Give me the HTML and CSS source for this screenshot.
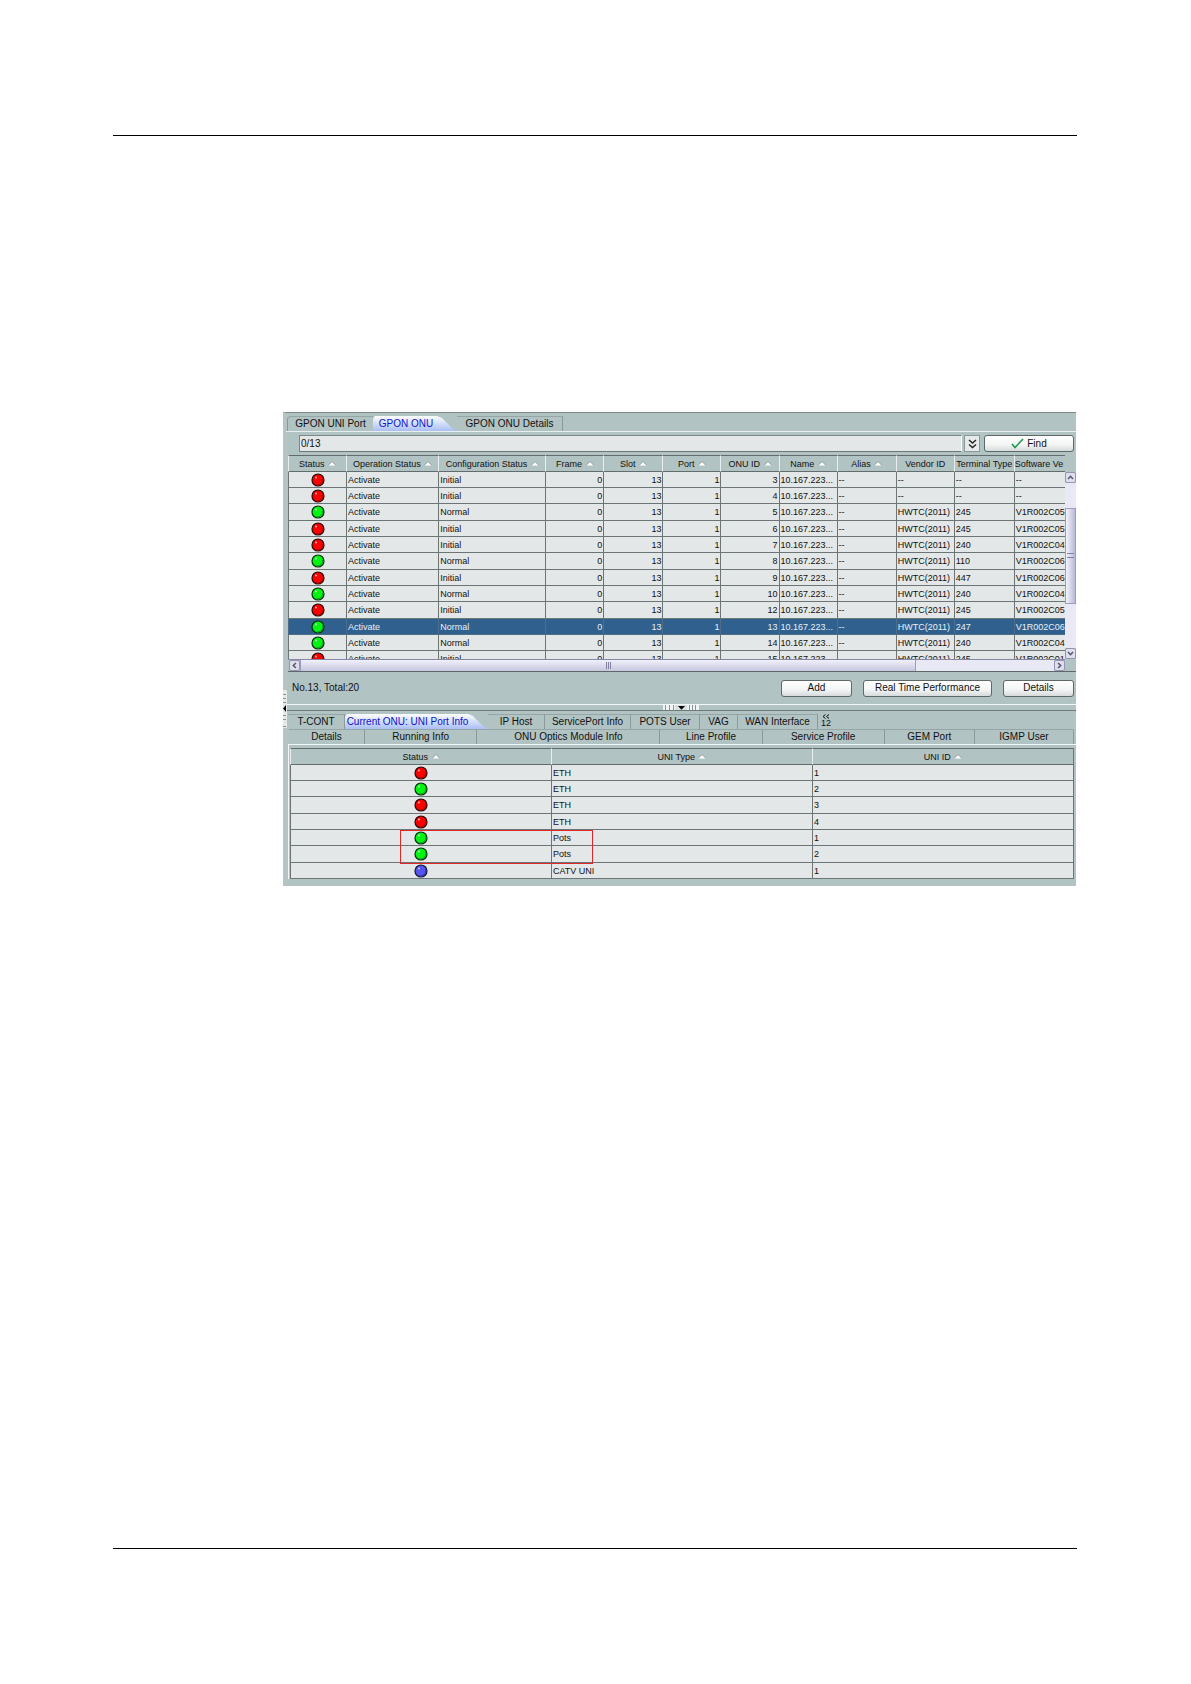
FILE: index.html
```html
<!DOCTYPE html>
<html lang="en">

<head>
    <meta charset="UTF-8">
    <meta name="viewport" content="width=device-width, initial-scale=1.0">
    <title>GPON ONU</title>
    <link rel="stylesheet" href="styles.css">
</head>

<body>
    <!-- shared icons -->
    <svg class="defs" width="0" height="0" aria-hidden="true">
        <symbol id="sort" viewBox="0 0 8 5">
            <path d="M0 4.5L4 .5L8 4.5Z" fill="#fff"/>
            <path d="M0 4.5L4 .5L8 4.5" fill="none" stroke="#7c8a8a" stroke-width=".8"/>
        </symbol>
        <symbol id="led-red" viewBox="0 0 14 14">
            <circle cx="7" cy="7" r="6" fill="#fa0000" stroke="#2a0808" stroke-width="1.2"/>
            <path d="M11.6 5.5A5 5 0 0 1 5.5 11.7" fill="none" stroke="#b00" stroke-width="1"/>
            <circle cx="5" cy="4.6" r="1" fill="#ffb0b0"/>
        </symbol>
        <symbol id="led-green" viewBox="0 0 14 14">
            <circle cx="7" cy="7" r="6" fill="#00f610" stroke="#08300c" stroke-width="1.2"/>
            <path d="M11.6 5.5A5 5 0 0 1 5.5 11.7" fill="none" stroke="#0a9a30" stroke-width="1"/>
            <circle cx="5" cy="4.6" r="1" fill="#c8ffc8"/>
        </symbol>
        <symbol id="led-blue" viewBox="0 0 14 14">
            <circle cx="7" cy="7" r="6" fill="#5454f0" stroke="#14143c" stroke-width="1.2"/>
            <path d="M11.6 5.5A5 5 0 0 1 5.5 11.7" fill="none" stroke="#3030a8" stroke-width="1"/>
            <circle cx="5" cy="4.6" r="1" fill="#d0d0ff"/>
        </symbol>
    </svg>

    <div class="page">
        <main class="window">
            <section class="top">
                <div class="tabs">
                    <button class="tab first">GPON UNI Port</button>
                    <button class="tab active">GPON ONU</button>
                    <button class="tab details">GPON ONU Details</button>
                </div>

                <div class="filter">
                    <input type="text" value="0/13" aria-label="Filter">
                    <button class="expand" aria-label="Expand">
                        <svg width="9" height="10" viewBox="0 0 9 10"><path d="M1 1L4.500 4L8 1M1 5.500L4.500 8.500L8 5.500" fill="none" stroke="#222" stroke-width="1.400"/></svg>
                    </button>
                    <button class="btn find">
                        <svg width="13" height="11" viewBox="0 0 13 11"><path d="M1 6L4 9.500L12 1" fill="none" stroke="#1c9a50" stroke-width="1.600"/></svg>
                        Find
                    </button>
                </div>

                <div class="grid">
                    <div class="grid-body">
                        <table class="data onu">
                            <colgroup>
                                <col class="c58"><col class="c92"><col class="c107"><col class="c58"><col class="c59"><col class="c58">
                                <col class="c58"><col class="c58"><col class="c59"><col class="c58"><col class="c60"><col class="c51">
                            </colgroup>
                            <thead>
                                <tr>
                                    <th>Status <svg class="sort"><use href="#sort"/></svg></th>
                                    <th>Operation Status <svg class="sort"><use href="#sort"/></svg></th>
                                    <th>Configuration Status <svg class="sort"><use href="#sort"/></svg></th>
                                    <th>Frame <svg class="sort"><use href="#sort"/></svg></th>
                                    <th>Slot <svg class="sort"><use href="#sort"/></svg></th>
                                    <th>Port <svg class="sort"><use href="#sort"/></svg></th>
                                    <th>ONU ID <svg class="sort"><use href="#sort"/></svg></th>
                                    <th>Name <svg class="sort"><use href="#sort"/></svg></th>
                                    <th>Alias <svg class="sort"><use href="#sort"/></svg></th>
                                    <th>Vendor ID</th>
                                    <th>Terminal Type</th>
                                    <th class="left">Software Ve</th>
                                </tr>
                            </thead>
                            <tbody>
                                <tr><td><svg class="led"><use href="#led-red"/></svg></td><td>Activate</td><td>Initial</td><td>0</td><td>13</td><td>1</td><td>3</td><td>10.167.223...</td><td>--</td><td>--</td><td>--</td><td>--</td></tr>
                                <tr><td><svg class="led"><use href="#led-red"/></svg></td><td>Activate</td><td>Initial</td><td>0</td><td>13</td><td>1</td><td>4</td><td>10.167.223...</td><td>--</td><td>--</td><td>--</td><td>--</td></tr>
                                <tr><td><svg class="led"><use href="#led-green"/></svg></td><td>Activate</td><td>Normal</td><td>0</td><td>13</td><td>1</td><td>5</td><td>10.167.223...</td><td>--</td><td>HWTC(2011)</td><td>245</td><td>V1R002C05</td></tr>
                                <tr><td><svg class="led"><use href="#led-red"/></svg></td><td>Activate</td><td>Initial</td><td>0</td><td>13</td><td>1</td><td>6</td><td>10.167.223...</td><td>--</td><td>HWTC(2011)</td><td>245</td><td>V1R002C05</td></tr>
                                <tr><td><svg class="led"><use href="#led-red"/></svg></td><td>Activate</td><td>Initial</td><td>0</td><td>13</td><td>1</td><td>7</td><td>10.167.223...</td><td>--</td><td>HWTC(2011)</td><td>240</td><td>V1R002C04</td></tr>
                                <tr><td><svg class="led"><use href="#led-green"/></svg></td><td>Activate</td><td>Normal</td><td>0</td><td>13</td><td>1</td><td>8</td><td>10.167.223...</td><td>--</td><td>HWTC(2011)</td><td>110</td><td>V1R002C06</td></tr>
                                <tr><td><svg class="led"><use href="#led-red"/></svg></td><td>Activate</td><td>Initial</td><td>0</td><td>13</td><td>1</td><td>9</td><td>10.167.223...</td><td>--</td><td>HWTC(2011)</td><td>447</td><td>V1R002C06</td></tr>
                                <tr><td><svg class="led"><use href="#led-green"/></svg></td><td>Activate</td><td>Normal</td><td>0</td><td>13</td><td>1</td><td>10</td><td>10.167.223...</td><td>--</td><td>HWTC(2011)</td><td>240</td><td>V1R002C04</td></tr>
                                <tr><td><svg class="led"><use href="#led-red"/></svg></td><td>Activate</td><td>Initial</td><td>0</td><td>13</td><td>1</td><td>12</td><td>10.167.223...</td><td>--</td><td>HWTC(2011)</td><td>245</td><td>V1R002C05</td></tr>
                                <tr class="selected"><td><svg class="led"><use href="#led-green"/></svg></td><td>Activate</td><td>Normal</td><td>0</td><td>13</td><td>1</td><td>13</td><td>10.167.223...</td><td>--</td><td>HWTC(2011)</td><td>247</td><td>V1R002C06</td></tr>
                                <tr><td><svg class="led"><use href="#led-green"/></svg></td><td>Activate</td><td>Normal</td><td>0</td><td>13</td><td>1</td><td>14</td><td>10.167.223...</td><td>--</td><td>HWTC(2011)</td><td>240</td><td>V1R002C04</td></tr>
                                <tr><td><svg class="led"><use href="#led-red"/></svg></td><td>Activate</td><td>Initial</td><td>0</td><td>13</td><td>1</td><td>15</td><td>10.167.223...</td><td>--</td><td>HWTC(2011)</td><td>245</td><td>V1R002C01</td></tr>
                            </tbody>
                        </table>
                    </div>
                    <div class="vbar">
                        <button class="arrow" aria-label="Scroll up"><svg width="7" height="5" viewBox="0 0 7 5"><path d="M1 4L3.500 1.300L6 4" fill="none" stroke="#555570" stroke-width="1.500"/></svg></button>
                        <div class="space before"></div>
                        <div class="thumb"><i class="grip"></i></div>
                        <div class="space after"></div>
                        <button class="arrow" aria-label="Scroll down"><svg width="7" height="5" viewBox="0 0 7 5"><path d="M1 1L3.500 3.700L6 1" fill="none" stroke="#555570" stroke-width="1.500"/></svg></button>
                    </div>
                    <div class="hbar">
                        <button class="arrow" aria-label="Scroll left"><svg width="5" height="7" viewBox="0 0 5 7"><path d="M4 1L1.300 3.500L4 6" fill="none" stroke="#555570" stroke-width="1.500"/></svg></button>
                        <div class="thumb"><i class="grip"></i></div>
                        <div class="space"></div>
                        <button class="arrow" aria-label="Scroll right"><svg width="5" height="7" viewBox="0 0 5 7"><path d="M1 1L3.700 3.500L1 6" fill="none" stroke="#555570" stroke-width="1.500"/></svg></button>
                    </div>
                </div>

                <div class="actions">
                    <span class="total">No.13, Total:20</span>
                    <button class="btn">Add</button>
                    <button class="btn wide">Real Time Performance</button>
                    <button class="btn">Details</button>
                </div>
            </section>

            <div class="splitter">
                <div class="handle">
                    <svg width="36" height="6" viewBox="0 0 36 6">
                        <path d="M0 0H12V6H0ZM24 0H36V6H24Z" fill="#f1f4f4"/>
                        <path d="M2.500 0V6M6.500 0V6M10.500 0V6M26.500 0V6M29.500 0V6M32.500 0V6" stroke="#8a9696" stroke-width="1"/>
                        <path d="M12 0H24V6H12Z" fill="#d7dfdf"/>
                        <path d="M15 1H22L18.500 4.800Z" fill="#000"/>
                    </svg>
                </div>
            </div>

            <section class="bottom">
                <div class="tabs row-one">
                    <button class="tab">T-CONT</button>
                    <button class="tab active">Current ONU: UNI Port Info</button>
                    <button class="tab">IP Host</button>
                    <button class="tab">ServicePort Info</button>
                    <button class="tab">POTS User</button>
                    <button class="tab">VAG</button>
                    <button class="tab">WAN Interface</button>
                    <button class="more" aria-label="12 more tabs">
                        <svg width="8" height="5" viewBox="0 0 8 5"><path d="M3.500 .5L1 2.500L3.500 4.500M7 .5L4.500 2.500L7 4.500" fill="none" stroke="#111" stroke-width="1"/></svg>
                        <span>12</span>
                    </button>
                </div>
                <div class="tabs row-two">
                    <button class="tab">Details</button>
                    <button class="tab">Running Info</button>
                    <button class="tab">ONU Optics Module Info</button>
                    <button class="tab">Line Profile</button>
                    <button class="tab">Service Profile</button>
                    <button class="tab">GEM Port</button>
                    <button class="tab">IGMP User</button>
                </div>

                <div class="ports">
                    <table class="data uni">
                        <thead>
                            <tr>
                                <th>Status <svg class="sort"><use href="#sort"/></svg></th>
                                <th>UNI Type <svg class="sort"><use href="#sort"/></svg></th>
                                <th>UNI ID <svg class="sort"><use href="#sort"/></svg></th>
                            </tr>
                        </thead>
                        <tbody>
                            <tr><td><svg class="led"><use href="#led-red"/></svg></td><td>ETH</td><td>1</td></tr>
                            <tr><td><svg class="led"><use href="#led-green"/></svg></td><td>ETH</td><td>2</td></tr>
                            <tr><td><svg class="led"><use href="#led-red"/></svg></td><td>ETH</td><td>3</td></tr>
                            <tr><td><svg class="led"><use href="#led-red"/></svg></td><td>ETH</td><td>4</td></tr>
                            <tr><td><svg class="led"><use href="#led-green"/></svg></td><td>Pots</td><td>1</td></tr>
                            <tr><td><svg class="led"><use href="#led-green"/></svg></td><td>Pots</td><td>2</td></tr>
                            <tr><td><svg class="led"><use href="#led-blue"/></svg></td><td>CATV UNI</td><td>1</td></tr>
                        </tbody>
                    </table>
                    <!-- highlight over the Pots rows -->
                    <div class="mark"></div>
                </div>
            </section>

            <!-- collapse handle on the left edge -->
            <svg class="side-handle" width="4" height="38" viewBox="0 0 4 38">
                <path d="M0 0H4V38H0Z" fill="#e4eaea"/>
                <path d="M0 4.500H3M0 8.500H3M0 12.500H3M0 25.500H3M0 29.500H3M0 36.500H3" stroke="#8a9696" stroke-width="1"/>
                <path d="M3 15V22L0 18.500Z" fill="#000"/>
            </svg>
        </main>
    </div>
</body>

</html>
```

FILE: styles.css
```css
* {
    box-sizing: border-box;
}

body {
    margin: 0;
    background: #fff;
    font-family: "Liberation Sans", Arial, sans-serif;
    font-size: 10px;
    line-height: 12px;
    color: #111;
}

.defs {
    position: absolute;
}

button,
input {
    font: inherit;
    color: inherit;
    margin: 0;
    padding: 0;
}

/* printed page: a rule at the top and one at the bottom */
.page {
    margin: 135px 114px 0 113px;
    padding-top: 276px;
    padding-bottom: 662px;
    border-top: 1px solid #000;
    border-bottom: 1px solid #000;
}

.window {
    position: relative;
    margin-left: 170px;
    margin-right: 1px;
    background: #b1c3c3;
    border-top: 1px solid #7d8989;
    border-left: 3px solid #b9c3c3;
}

/* tabs */
.tabs {
    display: flex;
    height: 15px;
}

.tab {
    border: 0;
    border-top: 1px solid #96a5a5;
    border-right: 1px solid #8b9999;
    background: none;
    white-space: nowrap;
    text-align: center;
}

.tab.active {
    border: 0;
    padding-right: 18px;
    color: #1111cc;
    background: linear-gradient(#fdfdff, #a9bff5);
    clip-path: polygon(2px 0, calc(100% - 20px) 0, calc(100% - 15px) 2px, calc(100% - 5px) 12px, 100% 100%, 0 100%, 0 3px);
}

.top .tabs {
    margin: 3px 0 0 1px;
}

.top .tab.first {
    width: 86px;
    border-left: 1px solid #8b9999;
    border-top-left-radius: 4px;
    border-right: 0;
}

.top .tab.active {
    width: 84px;
}

.top .tab.details {
    width: 106px;
}

/* filter row */
.filter {
    display: flex;
    height: 24px;
    padding: 3px 2px 3px 13px;
    border-top: 1px solid #e8eeee;
}

.filter input {
    flex: 1;
    min-width: 0;
    padding: 0 1px;
    background: #e3e7e7;
    border: 1px solid #7c8888;
    border-right-color: #fff;
    border-bottom-color: #6b7575;
}

.expand {
    display: flex;
    align-items: center;
    justify-content: center;
    width: 16px;
    margin: 0 4px 0 2px;
    border: 1px solid #8b9797;
    background: #e6eaea;
}

.btn {
    width: 71px;
    height: 17px;
    border: 1px solid #5e6868;
    border-radius: 3px;
    background: linear-gradient(#fff, #f3f4f4 60%, #d5dada);
}

.btn.wide {
    width: 129px;
}

.btn.find {
    display: flex;
    align-items: center;
    justify-content: center;
    gap: 3px;
    width: 90px;
}

/* tables */
.data {
    width: 100%;
    table-layout: fixed;
    border-spacing: 0;
    font-size: 9px;
    line-height: 12px;
}

.data th {
    height: 17px;
    padding: 0;
    overflow: hidden;
    font-weight: normal;
    white-space: nowrap;
    background: #b1c3c3;
    border: 1px solid #626c6c;
    border-left-color: #e8eeee;
    border-width: 1px 0 1px 1px;
}

.data th.left {
    text-align: left;
}

.data td {
    height: 16px;
    padding: 0 1px;
    overflow: hidden;
    white-space: nowrap;
    background: #e3e7e7;
    border: solid #6b7575;
    border-width: 0 0 1px 1px;
}

.data tr:nth-child(3n) td {
    height: 17px;
}

.data td:first-child {
    text-align: center;
}

.onu td:nth-child(4),
.onu td:nth-child(5),
.onu td:nth-child(6),
.onu td:nth-child(7) {
    text-align: right;
}

.data .selected td {
    color: #e8f0f8;
    background: #30608d;
    border-color: #4c6c88;
}

.c51 { width: 51px; }
.c58 { width: 58px; }
.c59 { width: 59px; }
.c60 { width: 60px; }
.c92 { width: 92px; }
.c107 { width: 107px; }

.led {
    display: block;
    width: 14px;
    height: 14px;
    margin: 0 auto;
}

.sort {
    width: 8px;
    height: 5px;
    margin-left: 1px;
    vertical-align: 1px;
}

.grid {
    display: grid;
    grid-template-columns: 1fr 11px;
    grid-template-rows: 204px 12px;
    margin-left: 2px;
    border-bottom: 1px solid #5e6868;
}

.grid-body {
    overflow: hidden;
}

/* scrollbars */
.arrow {
    display: flex;
    flex: none;
    align-items: center;
    justify-content: center;
    width: 11px;
    height: 11px;
    border: 1px solid #9494b4;
    border-radius: 2px;
    background: #dedeec;
}

.thumb {
    display: flex;
    align-items: center;
    justify-content: center;
    border: 1px solid #9c9cbc;
}

.space {
    background: #e9e9f5;
}

.vbar {
    display: flex;
    flex-direction: column;
    margin-top: 17px;
}

.vbar .before { flex: 25; }
.vbar .after { flex: 45; }

.vbar .thumb {
    flex: 95;
    background: linear-gradient(90deg, #f3f3fc, #b9b9d8);
}

.vbar .grip {
    width: 7px;
    height: 5px;
    border: solid #8080a0;
    border-width: 1px 0;
}

.hbar {
    display: flex;
    padding-left: 1px;
    border-top: 1px solid #8585a5;
}

.hbar .space { flex: 138; }

.hbar .thumb {
    flex: 615;
    border-width: 0 1px;
    background: linear-gradient(#f1f1fb, #c6c6df);
}

.hbar .grip {
    width: 5px;
    height: 7px;
    border: solid #8080a0;
    border-width: 0 1px;
    background: linear-gradient(90deg, transparent 1px, #8080a0 1px, #8080a0 2px, transparent 2px);
}

/* footer of the upper pane */
.actions {
    display: flex;
    align-items: center;
    gap: 11px;
    height: 32px;
    padding: 0 2px 0 6px;
}

.total {
    flex: 1;
}

.splitter {
    display: flex;
    justify-content: center;
    height: 7px;
    border-top: 1px solid #f2f6f6;
    border-bottom: 1px solid #6f7b7b;
}

.handle {
    height: 5px;
    overflow: hidden;
}

.handle svg {
    display: block;
}

/* lower pane */
.bottom {
    padding: 3px 0 7px 2px;
}

.row-one .tab {
    width: 57px;
}

.row-one .tab:nth-child(2) { width: 143px; }
.row-one .tab:nth-child(4) { width: 86px; }
.row-one .tab:nth-child(5) { width: 69px; }
.row-one .tab:nth-child(6) { width: 38px; }
.row-one .tab:nth-child(7) { width: 80px; }

.more {
    display: flex;
    flex-direction: column;
    align-items: center;
    width: 16px;
    border: 0;
    background: none;
    font-size: 9px;
    line-height: 9px;
}

.row-two {
    display: grid;
    grid-template-columns: 76fr 112fr 183fr 102fr 122fr 90fr 99fr;
    margin: 0 2px 0 1px;
}

.ports {
    position: relative;
    padding: 3px 2px 0 1px;
    border-top: 1px solid #f2f6f6;
    border-left: 1px solid #f2f6f6;
}

.uni {
    border-right: 1px solid #6b7575;
}

.mark {
    position: absolute;
    top: 85px;
    left: 111px;
    width: 193px;
    height: 34px;
    border: 1px solid #e02828;
}

.side-handle {
    position: absolute;
    left: -3px;
    top: 277px;
}
```
